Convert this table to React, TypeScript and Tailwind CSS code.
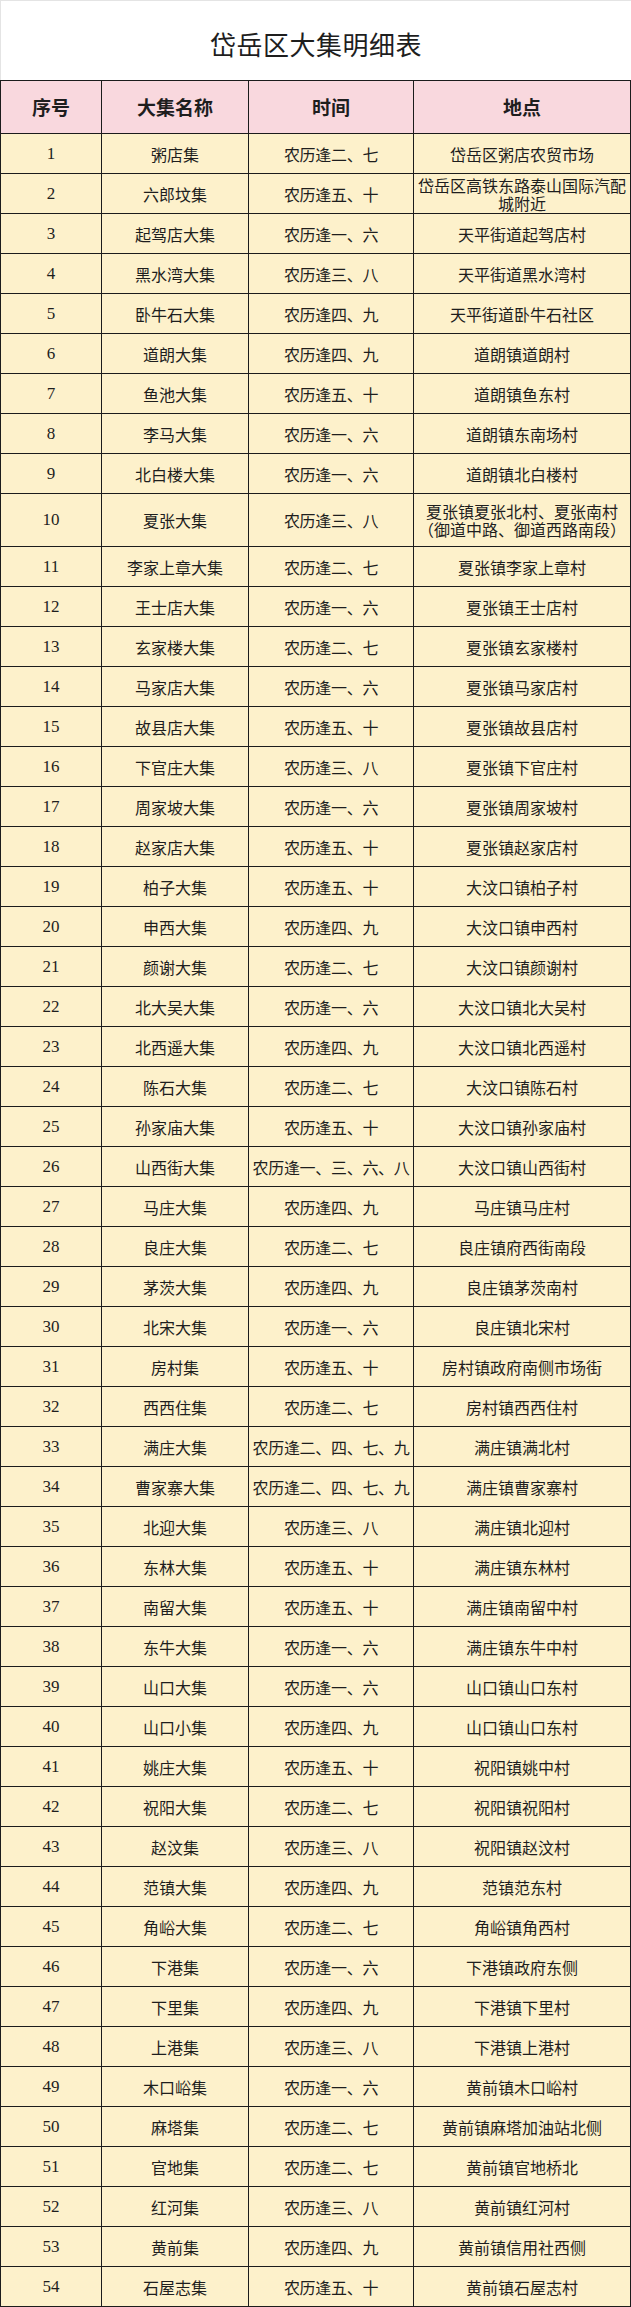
import React from "react";

type Market = [string, string, string];

// [name, time, place]; index + 1 is the 序号
const markets: Market[] = [
  ["粥店集", "农历逢二、七", "岱岳区粥店农贸市场"],
  ["六郎坟集", "农历逢五、十", "岱岳区高铁东路泰山国际汽配城附近"],
  ["起驾店大集", "农历逢一、六", "天平街道起驾店村"],
  ["黑水湾大集", "农历逢三、八", "天平街道黑水湾村"],
  ["卧牛石大集", "农历逢四、九", "天平街道卧牛石社区"],
  ["道朗大集", "农历逢四、九", "道朗镇道朗村"],
  ["鱼池大集", "农历逢五、十", "道朗镇鱼东村"],
  ["李马大集", "农历逢一、六", "道朗镇东南场村"],
  ["北白楼大集", "农历逢一、六", "道朗镇北白楼村"],
  ["夏张大集", "农历逢三、八", "夏张镇夏张北村、夏张南村（御道中路、御道西路南段）"],
  ["李家上章大集", "农历逢二、七", "夏张镇李家上章村"],
  ["王士店大集", "农历逢一、六", "夏张镇王士店村"],
  ["玄家楼大集", "农历逢二、七", "夏张镇玄家楼村"],
  ["马家店大集", "农历逢一、六", "夏张镇马家店村"],
  ["故县店大集", "农历逢五、十", "夏张镇故县店村"],
  ["下官庄大集", "农历逢三、八", "夏张镇下官庄村"],
  ["周家坡大集", "农历逢一、六", "夏张镇周家坡村"],
  ["赵家店大集", "农历逢五、十", "夏张镇赵家店村"],
  ["柏子大集", "农历逢五、十", "大汶口镇柏子村"],
  ["申西大集", "农历逢四、九", "大汶口镇申西村"],
  ["颜谢大集", "农历逢二、七", "大汶口镇颜谢村"],
  ["北大吴大集", "农历逢一、六", "大汶口镇北大吴村"],
  ["北西遥大集", "农历逢四、九", "大汶口镇北西遥村"],
  ["陈石大集", "农历逢二、七", "大汶口镇陈石村"],
  ["孙家庙大集", "农历逢五、十", "大汶口镇孙家庙村"],
  ["山西街大集", "农历逢一、三、六、八", "大汶口镇山西街村"],
  ["马庄大集", "农历逢四、九", "马庄镇马庄村"],
  ["良庄大集", "农历逢二、七", "良庄镇府西街南段"],
  ["茅茨大集", "农历逢四、九", "良庄镇茅茨南村"],
  ["北宋大集", "农历逢一、六", "良庄镇北宋村"],
  ["房村集", "农历逢五、十", "房村镇政府南侧市场街"],
  ["西西住集", "农历逢二、七", "房村镇西西住村"],
  ["满庄大集", "农历逢二、四、七、九", "满庄镇满北村"],
  ["曹家寨大集", "农历逢二、四、七、九", "满庄镇曹家寨村"],
  ["北迎大集", "农历逢三、八", "满庄镇北迎村"],
  ["东林大集", "农历逢五、十", "满庄镇东林村"],
  ["南留大集", "农历逢五、十", "满庄镇南留中村"],
  ["东牛大集", "农历逢一、六", "满庄镇东牛中村"],
  ["山口大集", "农历逢一、六", "山口镇山口东村"],
  ["山口小集", "农历逢四、九", "山口镇山口东村"],
  ["姚庄大集", "农历逢五、十", "祝阳镇姚中村"],
  ["祝阳大集", "农历逢二、七", "祝阳镇祝阳村"],
  ["赵汶集", "农历逢三、八", "祝阳镇赵汶村"],
  ["范镇大集", "农历逢四、九", "范镇范东村"],
  ["角峪大集", "农历逢二、七", "角峪镇角西村"],
  ["下港集", "农历逢一、六", "下港镇政府东侧"],
  ["下里集", "农历逢四、九", "下港镇下里村"],
  ["上港集", "农历逢三、八", "下港镇上港村"],
  ["木口峪集", "农历逢一、六", "黄前镇木口峪村"],
  ["麻塔集", "农历逢二、七", "黄前镇麻塔加油站北侧"],
  ["官地集", "农历逢二、七", "黄前镇官地桥北"],
  ["红河集", "农历逢三、八", "黄前镇红河村"],
  ["黄前集", "农历逢四、九", "黄前镇信用社西侧"],
  ["石屋志集", "农历逢五、十", "黄前镇石屋志村"],
];

const cell = "border border-[#1c1c1c] p-0 text-center align-middle";

export default function App() {
  return (
    <div
      className="w-[631px] bg-white text-[#1e1e1e]"
      style={{ fontFamily: '"Noto Sans CJK SC", "Liberation Sans", sans-serif' }}
    >
      {/* Title */}
      <div className="flex h-[80px] items-center justify-center border-t border-l border-[#e4e4e4] pt-[6px]">
        <h1 className="text-[26px] font-normal leading-none tracking-[0.5px]">岱岳区大集明细表</h1>
      </div>

      {/* Table */}
      <table className="w-full table-fixed border-collapse">
        <colgroup>
          <col className="w-[101px]" />
          <col className="w-[147px]" />
          <col className="w-[165px]" />
          <col />
        </colgroup>
        <thead>
          <tr className="h-[53px] bg-[#f9d8de]">
            <th className={`${cell} text-[19px] font-bold`}>序号</th>
            <th className={`${cell} text-[19px] font-bold`}>大集名称</th>
            <th className={`${cell} text-[19px] font-bold`}>时间</th>
            <th className={`${cell} text-[19px] font-bold`}>地点</th>
          </tr>
        </thead>
        <tbody className="bg-[#fdf1cb] text-[16px] leading-[18px]">
          {markets.map(([name, time, place], i) => (
            <tr key={i} className={i === 9 ? "h-[53px]" : "h-[40px]"}>
              <td className={`${cell} text-[17px]`} style={{ fontFamily: '"Liberation Serif", serif' }}>
                {i + 1}
              </td>
              <td className={cell}>{name}</td>
              <td className={`${cell} whitespace-nowrap tracking-[-0.3px]`}>{time}</td>
              <td className={`${cell} px-[1px]`}>{place}</td>
            </tr>
          ))}
        </tbody>
      </table>
    </div>
  );
}
